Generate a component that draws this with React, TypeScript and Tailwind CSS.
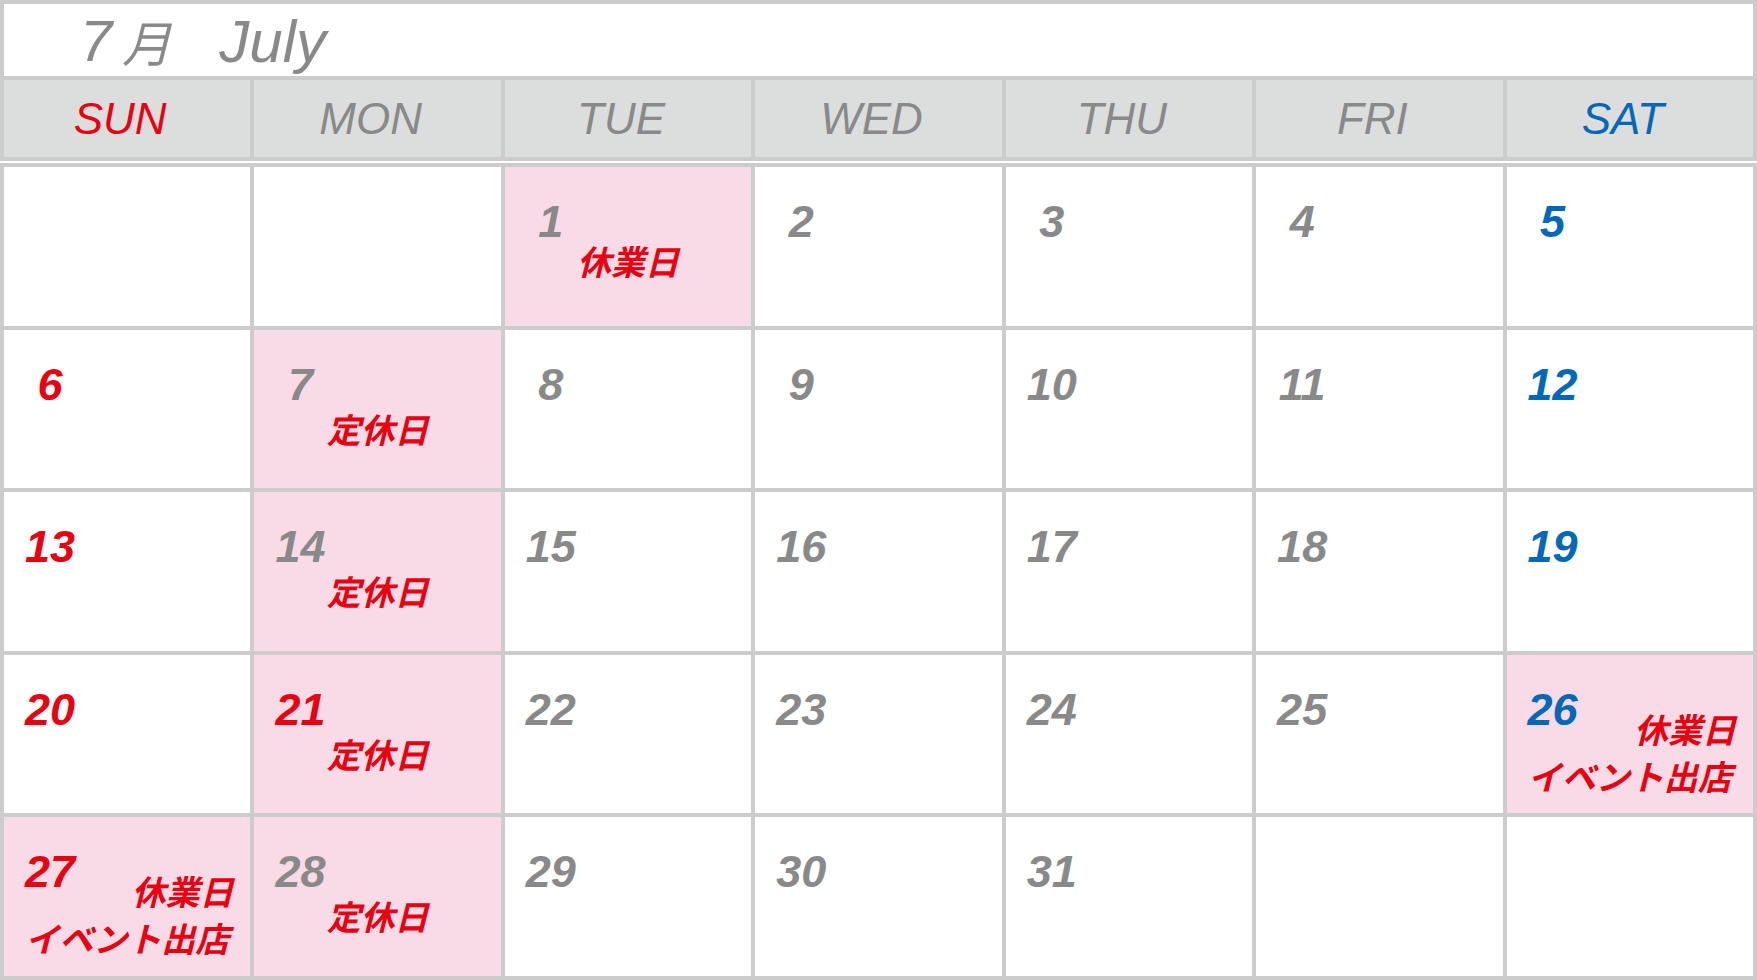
type Kind = 'regular' | 'closed' | 'event';
type Day = { d: number; kind?: Kind; holiday?: boolean } | null;

const HEADERS = [
  { label: 'SUN', color: 'text-[#e60012]' },
  { label: 'MON', color: 'text-[#898989]' },
  { label: 'TUE', color: 'text-[#898989]' },
  { label: 'WED', color: 'text-[#898989]' },
  { label: 'THU', color: 'text-[#898989]' },
  { label: 'FRI', color: 'text-[#898989]' },
  { label: 'SAT', color: 'text-[#0068b7]' },
];

const WEEKS: Day[][] = [
  [null, null, { d: 1, kind: 'closed' }, { d: 2 }, { d: 3 }, { d: 4 }, { d: 5 }],
  [{ d: 6 }, { d: 7, kind: 'regular' }, { d: 8 }, { d: 9 }, { d: 10 }, { d: 11 }, { d: 12 }],
  [{ d: 13 }, { d: 14, kind: 'regular' }, { d: 15 }, { d: 16 }, { d: 17 }, { d: 18 }, { d: 19 }],
  [{ d: 20 }, { d: 21, kind: 'regular', holiday: true }, { d: 22 }, { d: 23 }, { d: 24 }, { d: 25 }, { d: 26, kind: 'event' }],
  [{ d: 27, kind: 'event' }, { d: 28, kind: 'regular' }, { d: 29 }, { d: 30 }, { d: 31 }, null, null],
];

const jp = "font-['Noto_Sans_CJK_JP',sans-serif] font-bold italic text-[34px] leading-none text-[#e60012]";

function DayCell({ day, col }: { day: Day; col: number }) {
  if (!day) return <div className="bg-white" />;
  const color =
    col === 0 || day.holiday ? 'text-[#e60012]' : col === 6 ? 'text-[#0068b7]' : 'text-[#898989]';
  const num = (
    <div className={`w-[92px] text-center font-['Liberation_Sans',sans-serif] font-bold italic text-[45px] leading-none ${color}`}>
      {day.d}
    </div>
  );

  if (day.kind === 'event') {
    return (
      <div className="bg-[#f8dbe6] flex flex-col">
        <div className="flex items-start justify-between pt-[32px]">
          {num}
          <div className={`${jp} mt-[25px] pr-[17px]`}>休業日</div>
        </div>
        <div className={`${jp} mt-[13px] text-center`}>イベント出店</div>
      </div>
    );
  }

  return (
    <div className={`${day.kind ? 'bg-[#f8dbe6]' : 'bg-white'} flex flex-col pt-[32px]`}>
      {num}
      {day.kind === 'closed' && <div className={`${jp} mt-[0px] text-center`}>休業日</div>}
      {day.kind === 'regular' && <div className={`${jp} mt-[5px] text-center`}>定休日</div>}
    </div>
  );
}

export default function App() {
  return (
    <div className="w-[1757px] h-[980px] bg-[#cccccc] p-[4px] flex flex-col">
      {/* Month title */}
      <div className="h-[72px] bg-white flex items-start pl-[76px] pt-[8px] font-['Liberation_Sans',sans-serif] italic leading-none text-[#898989]">
        <span className="text-[58px]">7</span>
        <span className="ml-[10px] mt-[4px] text-[49px] font-['Noto_Sans_CJK_JP',sans-serif]">月</span>
        <span className="ml-[48px] text-[60px]">July</span>
      </div>

      {/* Weekday header */}
      <div className="mt-[4px] h-[77px] grid grid-cols-7 gap-[4px]">
        {HEADERS.map((h) => (
          <div key={h.label} className="bg-[#dcdddd] flex items-center justify-center pr-[14px]">
            <span className={`font-['Liberation_Sans',sans-serif] italic text-[44px] leading-none ${h.color}`}>
              {h.label}
            </span>
          </div>
        ))}
      </div>

      <div className="mt-[4px] h-[2px] bg-white -mx-[4px]" />

      {/* Days */}
      <div className="mt-[4px] flex-1 grid grid-cols-7 grid-rows-5 gap-[4px]">
        {WEEKS.map((week, w) =>
          week.map((day, c) => <DayCell key={`${w}-${c}`} day={day} col={c} />)
        )}
      </div>
    </div>
  );
}
